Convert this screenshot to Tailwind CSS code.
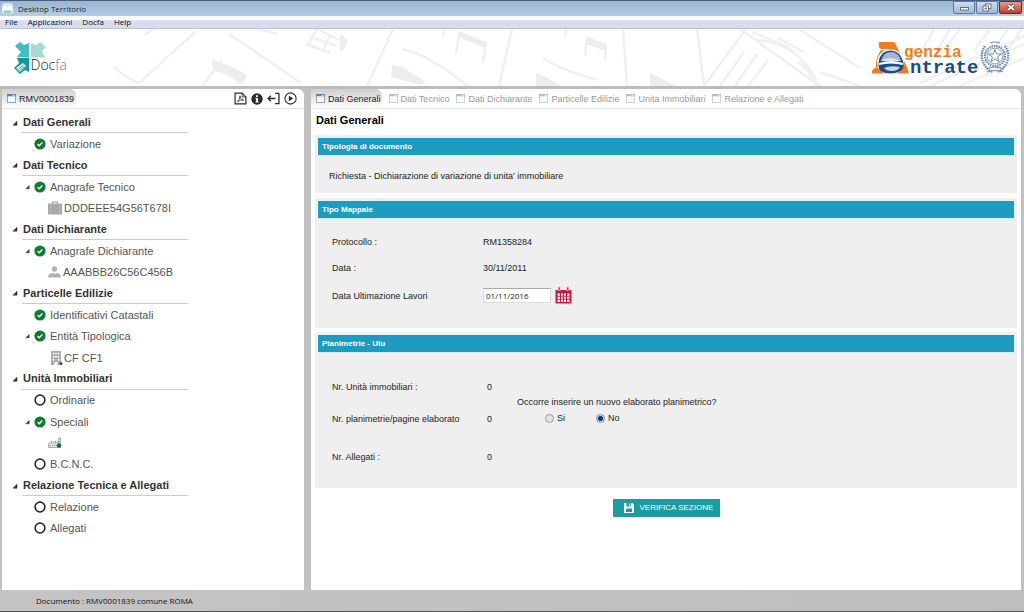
<!DOCTYPE html>
<html lang="it">
<head>
<meta charset="utf-8">
<title>Desktop Territorio</title>
<script src="https://cdn.jsdelivr.net/npm/@tailwindcss/browser@4"></script>
</head>
<body class="flex min-h-screen flex-col bg-[#c1c1c1] font-['Liberation_Sans',Arial,sans-serif] text-[9px] leading-[12px] text-[#222]">

<svg class="hidden" aria-hidden="true">
  <symbol id="win" viewBox="0 0 10 10"><rect x=".5" y=".5" width="9" height="9" fill="#f4f9fd" stroke="#86a0b8"/><path d="M0 0h10v2.500H0z" fill="#4f86b5"/><path d="M6 1h3v1H6z" fill="#cfe3f3"/></symbol>
  <symbol id="ok" viewBox="0 0 12 12"><circle cx="6" cy="6" r="5.600" fill="#0f7a2b"/><path d="M3.600 6.200l1.700 1.600 3-3.300" fill="none" stroke="#fff" stroke-width="1.500"/></symbol>
  <symbol id="ring" viewBox="0 0 12 12"><circle cx="6" cy="6" r="4.900" fill="#fff" stroke="#1c1c1c" stroke-width="1.500"/></symbol>
  <symbol id="tri" viewBox="0 0 6 6"><path d="M5 1.200V5.200H1z" fill="#333" stroke="#222" stroke-width=".5"/></symbol>
</svg>

<div class="flex h-[16px] items-center border-t border-[#4a5f7d] bg-linear-to-b from-[#9ab4d2] to-[#b5cde6] pl-[2px]">
  <svg class="h-[11px] w-[11px]" viewBox="0 0 11 11"><rect width="11" height="11" rx="3" fill="#d6ecec"/><path d="M0 7L3 2l2.500 3L8 2l3 5v2.500Q5.500 12 0 9.500z" fill="#fff"/><path d="M1 8.500Q5.500 6 10 8.500L9 10.500H2z" fill="#8fd0c4"/></svg>
  <span class="ml-[5px] flex-1 font-['Open_Sans',sans-serif] text-[8px] text-[#1b2433]">Desktop Territorio</span>
  <div class="flex gap-[1px] self-start pr-[2px]">
    <button aria-label="Riduci" class="flex h-[13px] w-[22px] items-center justify-center rounded-b-[2px] border border-[#61789a] bg-linear-to-b from-[#cfdef0] to-[#9fb9d6]"><svg class="h-[9px] w-[12px]" viewBox="0 0 12 9"><rect x="2.500" y="4.500" width="8" height="2.500" fill="#fff" stroke="#4b5666" stroke-width=".8"/></svg></button>
    <button aria-label="Ripristina" class="flex h-[13px] w-[22px] items-center justify-center rounded-b-[2px] border border-[#61789a] bg-linear-to-b from-[#cfdef0] to-[#9fb9d6]"><svg class="h-[9px] w-[12px]" viewBox="0 0 12 9" fill="#fff" stroke="#4b5666" stroke-width=".8"><rect x="4.500" y="1" width="5.500" height="4.500"/><rect x="2" y="3" width="5.500" height="5"/><path d="M4 5h1.500v1H4z"/></svg></button>
    <button aria-label="Chiudi" class="flex h-[13px] w-[23px] items-center justify-center rounded-b-[2px] border border-[#6b2a2a] bg-linear-to-b from-[#e39a8c] to-[#c13a26]"><svg class="h-[9px] w-[12px]" viewBox="0 0 12 9"><path d="M3 2l6 5M9 2l-6 5" stroke="#4a2a2a" stroke-width="3.200"/><path d="M3 2l6 5M9 2l-6 5" stroke="#fff" stroke-width="2"/></svg></button>
  </div>
</div>

<nav class="flex h-[13px] items-center gap-[10px] border-b border-[#b9c3da] bg-linear-to-b from-[#fafbfe] from-30% to-[#d6ddee] to-40% pl-[5px] font-['Open_Sans',sans-serif] text-[8px] text-[#111]">
  <button>File</button><button>Applicazioni</button><button>Docfa</button><button>Help</button>
</nav>

<header class="relative flex h-[57px] items-center justify-between bg-white pr-[13px] pl-[13px]">
  <svg class="absolute inset-0 h-full w-full" viewBox="0 29 1024 57" preserveAspectRatio="xMidYMid slice" fill="none" stroke="#f0f0f0" stroke-width="2.500" aria-hidden="true">
    <path d="M144 35l12-7M114 67q12 11 25 16l57-52M229 34l72 49M202 86l20-26M256 29l22 5"/>
    <path d="M212 60q18 4 35 15l-4 9h-6q0-7-24-14z" fill="#ededed" stroke="none"/>
    <path d="M308 44l9-15 24 12M306 44l24 9M312 37l24 9M322 52l8-16"/>
    <path d="M340 34l8 6-3 8-5 4z" fill="#ededed" stroke="none"/>
    <path d="M393 29l-26 57M403 49q28 7 66 38M445 29l-2 9M512 29l-13 57M566 29l-1 8M543 58q22 14 55 22M623 29l4 57M456 53l3-18M486 42l-3 21M585 56l2-18M606 45l-1 16"/>
    <path d="M392 65l10 2 24 15-5 3-30-8zM458 31l28 11-2 6-25-11zM536 73l10 4 15 9h-25zM586 36l20 8v7l-20-7zM650 73l26 13h-26z" fill="#ededed" stroke="none"/>
    <path d="M697 29l7 57M704 86l42-57M720 86l24-34M735 86l22-32M748 86l20-26"/>
    <path d="M740 29l80 57M752 32l34 14q20 14 32 40M756 40q40 2 60 40M778 38l26 14M798 62q12 8 18 24M800 30l60 38M914 66l20-37M928 66l22-37M944 50l16-21M990 29l-16 22M1008 29l-20 28M1022 29l-30 44M920 83l104-47M930 86l94-42M960 86l64-28M820 72l40 14"/>
  </svg>
  <svg class="relative h-[36px] w-[58px]" viewBox="13 40 58 36" role="img" aria-label="Docfa">
    <path d="M15 46l5-4 4 3 5-2v14H17l4-5z" fill="#3fbfc4"/>
    <path d="M31 43l5 2 4-3 6 5-4 4 3 6H31z" fill="#a9d9d6"/>
    <path d="M17 58h12v14l-4-2-5 4-6-6 5-5z" fill="#17969f"/>
    <path d="M16 68l7-5 3 3-6 6z" fill="#e9fafa"/><path d="M18.500 69l5-4M19.500 70.500l5-4" stroke="#17969f" stroke-width=".9"/>
    <path d="M29.500 43v30M16 57.500h30" stroke="#bfe6e6" stroke-width=".7"/>
    <text x="30.500" y="70" font-family="Open Sans, sans-serif" font-weight="300" font-size="14" fill="#222">Doc<tspan fill="#777">fa</tspan></text>
  </svg>
  <svg class="relative h-[42px] w-[140px]" viewBox="871 37 140 42" role="img" aria-label="Agenzia Entrate">
    <path d="M880 42h13q2 0 3 3l12 24h-8l-12-20h-6q-3 0-3-3-1-4 1-4z" fill="#f47b20"/>
    <path d="M881 50l5 1-9 17 10 3v2.500h-15q-1-4 4-6-1-9 5-17.500z" fill="#f47b20"/>
    <path d="M897 73.500h11q2-4-3-5h-6z" fill="#f47b20"/>
    <ellipse cx="890.500" cy="62" rx="13.500" ry="12.500" fill="#fff"/>
    <path d="M878.500 64q0-8 6-12 6-3 12 0 5 3 7 11 1 5-3 8-10 5-20 0-2-2-2-7z" fill="#174d8b"/>
    <path d="M881 61q2-9 10-9t10 9z" fill="#a9b1d6"/><path d="M881 61q8-6 20 0z" fill="#dfe2f2"/>
    <path d="M879 63q12-4 24 0v2q-12-3-24 0z" fill="#fff"/>
    <path d="M884 68q6-3 16-1-2 4-8 4-6 0-8-3z" fill="#c9d3e8"/>
    <text x="904" y="57" font-family="Liberation Mono, monospace" font-weight="700" font-size="16" fill="#f47b20">genzia</text>
    <text x="910" y="73" font-family="Liberation Mono, monospace" font-weight="700" font-size="19" fill="#174d87">ntrate</text>
    <g fill="none" stroke="#6e8fb2">
      <circle cx="995" cy="56" r="10" stroke-width="2.200" stroke-dasharray="1.600 .8"/>
      <circle cx="995" cy="56" r="7.900" stroke-width=".8"/>
      <path d="M995 49.500l1.600 4.600h4.800l-3.900 2.900 1.500 4.700-4-2.900-4 2.900 1.500-4.700-3.900-2.900h4.800z" stroke-width="1" fill="#fff"/>
      <path d="M985 46q-6 9-1 18 3 6 9 8M1005 46q6 9 1 18-3 6-9 8" stroke-width="2.400" stroke-dasharray="1.600 .8"/>
      <path d="M986 69q9-4 18 0M987 72q8-3 16 0M990 43q5-2 10 0" stroke-width="1.200"/>
    </g>
  </svg>
</header>

<main class="flex flex-1 gap-[7px] border-t-[3px] border-[#bcbcbc] pr-[3px] pl-[2px]">
  <aside class="flex w-[302px] flex-col rounded-tr-[6px] bg-white">
    <div class="flex h-[20px] items-center border-b border-[#e3e3e3]">
      <div class="flex h-[19px] w-[74px] items-center gap-[3px] rounded-tr-[6px] bg-linear-to-b from-[#cfcfcf] to-white pl-[5px]">
        <svg class="h-[9px] w-[9px]"><use href="#win"/></svg><span>RMV0001839</span>
      </div>
      <div class="ml-auto flex gap-[4px] pr-[7px] text-[#2b2b2b]">
        <button aria-label="PDF"><svg class="block h-[13px] w-[13px]" viewBox="0 0 12 12" fill="none" stroke="currentColor"><path d="M1 1h6.500L11 4.500V11H1z" stroke-width="1.100"/><path d="M7.500 1v3.500H11" stroke-width=".8"/><path d="M3 9q2.500-2 2.500-5.500 0 3.500 3.500 4-3.500-.5-6 1.500z" stroke-width=".7"/></svg></button>
        <button aria-label="Informazioni"><svg class="block h-[12px] w-[12px]" viewBox="0 0 12 12"><circle cx="6" cy="6" r="5.700" fill="currentColor"/><path d="M5 2.200h2v1.700H5zM4.500 5H7v3.500h.7v1H4.400v-1h.7V6h-.6z" fill="#fff"/></svg></button>
        <button aria-label="Esci"><svg class="block h-[13px] w-[13px]" viewBox="0 0 12 12" fill="none" stroke="currentColor" stroke-width="1.200"><path d="M7.500 1.200H11v9.600H7.500M.8 6h7M3.600 3.500L1 6l2.600 2.500"/></svg></button>
        <button aria-label="Avvia"><svg class="block h-[13px] w-[13px]" viewBox="0 0 12 12"><circle cx="6" cy="6" r="5.200" fill="none" stroke="currentColor" stroke-width="1"/><path d="M4.500 3.400L8.600 6l-4.100 2.600z" fill="currentColor"/></svg></button>
      </div>
    </div>

    <ul class="mt-[3px] grid h-[427px] auto-rows-fr pl-[10px] text-[11px] text-[#555]">
      <li class="flex items-center gap-[4px] font-bold text-[#333]"><svg class="h-[6px] w-[6px]"><use href="#tri"/></svg><span class="flex h-full w-[166px] items-center border-b border-[#ccc] pl-[1px]">Dati Generali</span></li>
      <li class="flex items-center gap-[4px] pl-[22px]"><svg class="h-[12px] w-[12px]"><use href="#ok"/></svg>Variazione</li>
      <li class="flex items-center gap-[4px] font-bold text-[#333]"><svg class="h-[6px] w-[6px]"><use href="#tri"/></svg><span class="flex h-full w-[166px] items-center border-b border-[#ccc] pl-[1px]">Dati Tecnico</span></li>
      <li class="flex items-center gap-[4px] pl-[13px]"><svg class="h-[6px] w-[5px]"><use href="#tri"/></svg><svg class="h-[12px] w-[12px]"><use href="#ok"/></svg>Anagrafe Tecnico</li>
      <li class="flex items-center gap-[2px] pl-[36px]"><svg class="h-[14px] w-[14px]" viewBox="0 0 14 14"><path d="M0 2.500h4V.5h6v2h4v11H0z" fill="#a9a9a9"/><path d="M5.200 1.700h3.600v1H5.200z" fill="#fff"/><path d="M2.500 3v10.500M11.500 3v10.500" stroke="#bfbfbf" stroke-width=".6"/></svg>DDDEEE54G56T678I</li>
      <li class="flex items-center gap-[4px] font-bold text-[#333]"><svg class="h-[6px] w-[6px]"><use href="#tri"/></svg><span class="flex h-full w-[166px] items-center border-b border-[#ccc] pl-[1px]">Dati Dichiarante</span></li>
      <li class="flex items-center gap-[4px] pl-[13px]"><svg class="h-[6px] w-[5px]"><use href="#tri"/></svg><svg class="h-[12px] w-[12px]"><use href="#ok"/></svg>Anagrafe Dichiarante</li>
      <li class="flex items-center gap-[2px] pl-[36px]"><svg class="h-[12px] w-[13px]" viewBox="0 0 13 12"><circle cx="6.500" cy="3" r="2.700" fill="#b3b3b3"/><path d="M0 11.500q0-4 4-4.500l2.500.8L9 7q4 .5 4 4.500z" fill="#b3b3b3"/></svg>AAABBB26C56C456B</li>
      <li class="flex items-center gap-[4px] font-bold text-[#333]"><svg class="h-[6px] w-[6px]"><use href="#tri"/></svg><span class="flex h-full w-[166px] items-center border-b border-[#ccc] pl-[1px]">Particelle Edilizie</span></li>
      <li class="flex items-center gap-[4px] pl-[22px]"><svg class="h-[12px] w-[12px]"><use href="#ok"/></svg>Identificativi Catastali</li>
      <li class="flex items-center gap-[4px] pl-[13px]"><svg class="h-[6px] w-[5px]"><use href="#tri"/></svg><svg class="h-[12px] w-[12px]"><use href="#ok"/></svg>Entità Tipologica</li>
      <li class="flex items-center gap-[1px] pl-[39px]"><svg class="h-[14px] w-[12px]" viewBox="0 0 12 14"><path d="M0 0h10v14H6.500v-3h-3v3H0z" fill="#ababab"/><path d="M1.800 1.800h1.500v1.800H1.800zM4.300 1.800h1.500v1.800H4.300zM6.800 1.800h1.500v1.800H6.800zM1.800 5h1.500v1.800H1.800zM4.300 5h1.500v1.800H4.300zM6.800 5h1.500v1.800H6.800zM1.800 8h1.500v1.800H1.800zM6.800 8h1.500v1.800H6.800z" fill="#fff"/><circle cx="10" cy="12.400" r="1.500" fill="#0f6a35"/></svg>CF CF1</li>
      <li class="flex items-center gap-[4px] font-bold text-[#333]"><svg class="h-[6px] w-[6px]"><use href="#tri"/></svg><span class="flex h-full w-[166px] items-center border-b border-[#ccc] pl-[1px]">Unità Immobiliari</span></li>
      <li class="flex items-center gap-[4px] pl-[22px]"><svg class="h-[12px] w-[12px]"><use href="#ring"/></svg>Ordinarie</li>
      <li class="flex items-center gap-[4px] pl-[13px]"><svg class="h-[6px] w-[5px]"><use href="#tri"/></svg><svg class="h-[12px] w-[12px]"><use href="#ok"/></svg>Speciali</li>
      <li class="flex items-center pl-[36px]"><svg class="h-[12px] w-[14px]" viewBox="0 0 14 12"><path d="M.5 10.500V6.500L4 4v2.500L7.500 4v2.500L10.500 4l.3 2.500V1H12.500v9.500z" fill="#e2e2e2" stroke="#999" stroke-width=".8"/><path d="M2 8.500h7" stroke="#8c8c8c" stroke-width="1.200" stroke-dasharray="1 1"/><circle cx="11" cy="8.500" r="2.200" fill="#12703a"/></svg></li>
      <li class="flex items-center gap-[4px] pl-[22px]"><svg class="h-[12px] w-[12px]"><use href="#ring"/></svg>B.C.N.C.</li>
      <li class="flex items-center gap-[4px] font-bold text-[#333]"><svg class="h-[6px] w-[6px]"><use href="#tri"/></svg><span class="flex h-full w-[166px] items-center border-b border-[#ccc] pl-[1px]">Relazione Tecnica e Allegati</span></li>
      <li class="flex items-center gap-[4px] pl-[22px]"><svg class="h-[12px] w-[12px]"><use href="#ring"/></svg>Relazione</li>
      <li class="flex items-center gap-[4px] pl-[22px]"><svg class="h-[12px] w-[12px]"><use href="#ring"/></svg>Allegati</li>
    </ul>
  </aside>

  <section class="flex flex-1 flex-col rounded-tr-[6px] bg-white">
    <div class="flex h-[20px] items-center gap-[7px] border-b border-[#e3e3e3] text-[#999]">
      <button class="flex h-[19px] items-center gap-[3px] rounded-tr-[6px] bg-linear-to-b from-[#cfcfcf] to-white pr-[1px] pl-[5px] text-[#222]"><svg class="h-[9px] w-[9px]"><use href="#win"/></svg>Dati Generali</button>
      <button class="flex items-center gap-[3px]"><svg class="h-[9px] w-[9px] opacity-50"><use href="#win"/></svg>Dati Tecnico</button>
      <button class="flex items-center gap-[3px]"><svg class="h-[9px] w-[9px] opacity-50"><use href="#win"/></svg>Dati Dichiarante</button>
      <button class="flex items-center gap-[3px]"><svg class="h-[9px] w-[9px] opacity-50"><use href="#win"/></svg>Particelle Edilizie</button>
      <button class="flex items-center gap-[3px]"><svg class="h-[9px] w-[9px] opacity-50"><use href="#win"/></svg>Unita Immobiliari</button>
      <button class="flex items-center gap-[3px]"><svg class="h-[9px] w-[9px] opacity-50"><use href="#win"/></svg>Relazione e Allegati</button>
    </div>

    <form class="flex flex-col px-[4px]">
      <h1 class="mt-[3px] h-[23px] pl-[1px] text-[11px] leading-[16px] font-bold text-black">Dati Generali</h1>

      <section class="bg-[#efefef] p-[3px] pb-[10px]">
        <h2 class="h-[18px] border-b border-[#d5ebf2] bg-[#1e9bc0] pl-[4px] text-[8px] leading-[18px] font-bold text-white">Tipologia di documento</h2>
        <p class="mt-[13px] pl-[11px] leading-[14px]">Richiesta - Dichiarazione di variazione di unita' immobiliare</p>
      </section>

      <section class="mt-[5px] bg-[#efefef] p-[3px] pb-[23px]">
        <h2 class="h-[18px] border-b border-[#d5ebf2] bg-[#1e9bc0] pl-[4px] text-[8px] leading-[18px] font-bold text-white">Tipo Mappale</h2>
        <dl class="mt-[15px] grid grid-cols-[151px_auto] items-center gap-y-[10px] pl-[14px] leading-[16px]">
          <dt>Protocollo :</dt><dd>RM1358284</dd>
          <dt>Data :</dt><dd>30/11/2011</dd>
          <dt><label for="fine">Data Ultimazione Lavori</label></dt>
          <dd class="flex items-center gap-[4px] py-[1px]">
            <input id="fine" type="text" value="01/11/2016" class="h-[15px] w-[68px] border border-[#dcdcdc] border-t-[#a9a9a9] bg-white pl-[2px] font-['Open_Sans',sans-serif] text-[8px] text-[#222]">
            <button type="button" aria-label="Calendario"><svg class="block h-[17px] w-[17px]" viewBox="0 0 17 17"><path d="M.5 3h16v13.500H.5z" fill="#d0153f"/><path d="M3.200 0h2v3.500h-2zM11.800 0h2v3.500h-2z" fill="#d0153f" stroke="#efefef" stroke-width=".6"/><path d="M2.500 6.500h12v8.500h-12z" fill="#fff"/><path d="M2 9.200h13M2 12.200h13M5.500 6v9M8.500 6v9M11.500 6v9" stroke="#d0153f" stroke-width="1"/></svg></button>
          </dd>
        </dl>
      </section>

      <section class="mt-[4px] bg-[#efefef] p-[3px] pb-[22px]">
        <h2 class="h-[18px] border-b border-[#d5ebf2] bg-[#1e9bc0] pl-[4px] text-[8px] leading-[18px] font-bold text-white">Planimetrie - Uiu</h2>
        <div class="flex pt-[25px] pl-[14px]">
          <dl class="grid grid-cols-[155px_30px] leading-[18px]">
            <dt>Nr. Unità immobiliari :</dt><dd>0</dd>
            <dt class="mt-[14px]">Nr. planimetrie/pagine elaborato</dt><dd class="mt-[14px]">0</dd>
            <dt class="mt-[20px]">Nr. Allegati :</dt><dd class="mt-[20px]">0</dd>
          </dl>
          <fieldset class="mt-[17px]">
            <legend class="leading-[14px]">Occorre inserire un nuovo elaborato planimetrico?</legend>
            <div class="flex gap-[31px] pt-[2px] pl-[28px] leading-[14px]">
              <label class="flex items-center gap-[3px]"><input type="radio" name="elab" class="h-[9px] w-[9px] appearance-none rounded-full border border-[#999] bg-[#e4e4e4] checked:border-[#7a8fa5] checked:bg-radial checked:from-[#123f74] checked:from-45% checked:to-[#cfdde9] checked:to-50%">Si</label>
              <label class="flex items-center gap-[3px]"><input type="radio" name="elab" checked class="h-[9px] w-[9px] appearance-none rounded-full border border-[#999] bg-[#e4e4e4] checked:border-[#7a8fa5] checked:bg-radial checked:from-[#123f74] checked:from-45% checked:to-[#cfdde9] checked:to-50%">No</label>
            </div>
          </fieldset>
        </div>
      </section>

      <button type="button" class="mt-[11px] flex h-[18px] w-[107px] items-center gap-[6px] self-center bg-[#1d9ba0] pl-[11px] text-[8px] text-white"><svg class="h-[10px] w-[10px]" viewBox="0 0 10 10"><path d="M0 0h8.500L10 1.500V10H0z" fill="#fff"/><path d="M2.500 0h4.500v3.500H2.500zM2 5.500h6V9H2z" fill="#1d9ba0"/><path d="M5 .6h1.200v2.200H5z" fill="#fff"/></svg>VERIFICA SEZIONE</button>
    </form>
  </section>
</main>

<footer class="flex h-[22px] items-center border-b border-[#555] bg-linear-to-r from-[#c4c4c4] to-[#bebebe] pl-[36px] font-['Open_Sans',sans-serif] text-[8px] text-[#111]">Documento : RMV0001839 comune ROMA</footer>
</body>
</html>
